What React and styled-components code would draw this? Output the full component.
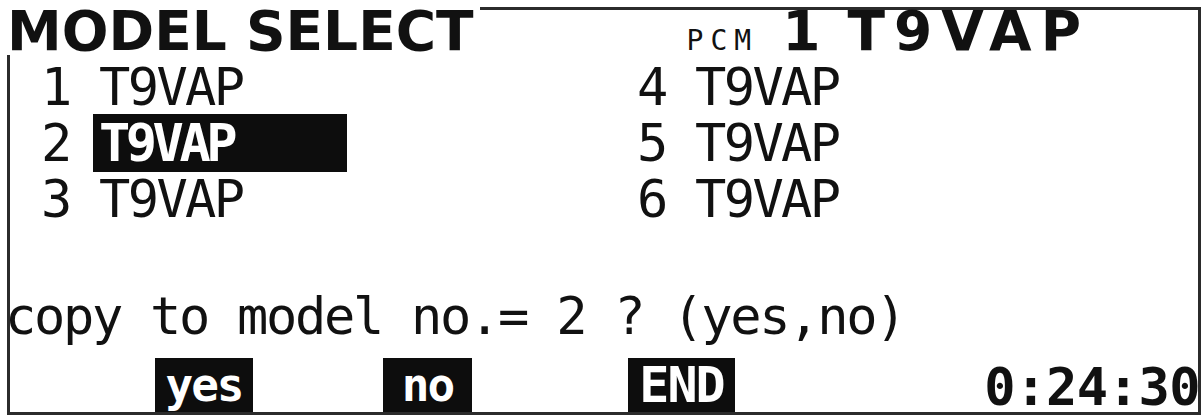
import React from 'react';
import styled, { createGlobalStyle } from 'styled-components';

const GlobalStyle = createGlobalStyle`
  html, body {
    margin: 0;
    padding: 0;
    background: #ffffff;
  }
  body {
    font-family: "DejaVu Sans Mono", "Liberation Mono", monospace;
    color: #111111;
  }
`;

const Screen = styled.div`
  width: 1204px;
  height: 417px;
  padding: 7px 3px 2px 7px;
  box-sizing: border-box;
  background: #ffffff;
  overflow: hidden;
`;

const Frame = styled.div`
  height: 408px;
  border: 3px solid #2b2b2b;
  box-sizing: border-box;
  display: flex;
  flex-direction: column;
`;

const Header = styled.div`
  display: flex;
  align-items: baseline;
  height: 48px;
  line-height: 48px;
  margin-top: -3px;
  margin-left: -4px;
  white-space: pre;
`;

const Title = styled.span`
  background: #ffffff;
  font-family: "DejaVu Sans", "Liberation Sans", sans-serif;
  font-weight: bold;
  font-size: 55px;
  padding: 0 6px 0 1px;
`;

const Mode = styled.span`
  font-size: 28px;
  letter-spacing: 7px;
  margin-left: ${({ $left }) => $left}px;
`;

const Big = styled.span`
  font-family: "DejaVu Sans", "Liberation Sans", sans-serif;
  font-weight: bold;
  font-size: 55px;
  letter-spacing: ${({ $spacing }) => $spacing || 0}px;
  margin-left: ${({ $left }) => $left}px;
`;

const ModelGrid = styled.div`
  display: grid;
  grid-template-columns: 596px 1fr;
  grid-template-rows: repeat(3, 56px);
  grid-auto-flow: column;
  margin-top: 4px;
  padding-left: 2px;
`;

const Row = styled.div`
  display: flex;
  align-items: center;
  font-size: 52px;
  line-height: 56px;
  letter-spacing: -2.6px;
  white-space: pre;
`;

const Num = styled.span`
  width: 87px;
  padding-left: 29px;
  box-sizing: border-box;
`;

const Name = styled.span`
  display: inline-block;
  box-sizing: border-box;
  height: 58px;
  line-height: 58px;
  margin-left: -6px;
  padding-left: 6px;
  width: 254px;
  background: ${({ $selected }) => ($selected ? '#0d0d0d' : 'transparent')};
  color: ${({ $selected }) => ($selected ? '#ffffff' : '#111111')};
  font-weight: ${({ $selected }) => ($selected ? 'bold' : 'normal')};
  letter-spacing: ${({ $selected }) => ($selected ? '-4.5px' : '-2.6px')};
`;

const Prompt = styled.div`
  margin-top: 61px;
  margin-left: -5px;
  font-size: 52px;
  line-height: 56px;
  letter-spacing: -2.3px;
  white-space: pre;
`;

const BottomBar = styled.div`
  display: flex;
  align-items: flex-end;
  margin-top: auto;
  height: 54px;
`;

const Key = styled.span`
  display: flex;
  align-items: flex-end;
  justify-content: center;
  box-sizing: border-box;
  width: ${({ $width }) => $width}px;
  height: 54px;
  margin-left: ${({ $left }) => $left}px;
  background: #0d0d0d;
  color: #ffffff;
  font-weight: bold;
  font-size: ${({ $size }) => $size}px;
  line-height: 54px;
  letter-spacing: -2px;
`;

const Clock = styled.span`
  margin-left: auto;
  margin-right: -2px;
  font-weight: bold;
  font-size: 52px;
  line-height: 50px;
  letter-spacing: -0.5px;
`;

const models = [
  { no: 1, name: 'T9VAP' },
  { no: 2, name: 'T9VAP', selected: true },
  { no: 3, name: 'T9VAP' },
  { no: 4, name: 'T9VAP' },
  { no: 5, name: 'T9VAP' },
  { no: 6, name: 'T9VAP' },
];

export default function App() {
  return (
    <>
      <GlobalStyle />
      <Screen>
        <Frame>
          <Header>
            <Title>MODEL SELECT</Title>
            <Mode $left={207}>PCM</Mode>
            <Big $left={24}>1</Big>
            <Big $left={27} $spacing={9}>T9VAP</Big>
          </Header>

          <ModelGrid>
            {models.map((m) => (
              <Row key={m.no}>
                <Num>{m.no}</Num>
                <Name $selected={m.selected}>{m.name}</Name>
              </Row>
            ))}
          </ModelGrid>

          <Prompt>copy to model no.= 2 ? (yes,no)</Prompt>

          <BottomBar>
            <Key $left={145} $width={98} $size={46}>yes</Key>
            <Key $left={130} $width={89} $size={46}>no</Key>
            <Key $left={156} $width={107} $size={50}>END</Key>
            <Clock>0:24:30</Clock>
          </BottomBar>
        </Frame>
      </Screen>
    </>
  );
}
